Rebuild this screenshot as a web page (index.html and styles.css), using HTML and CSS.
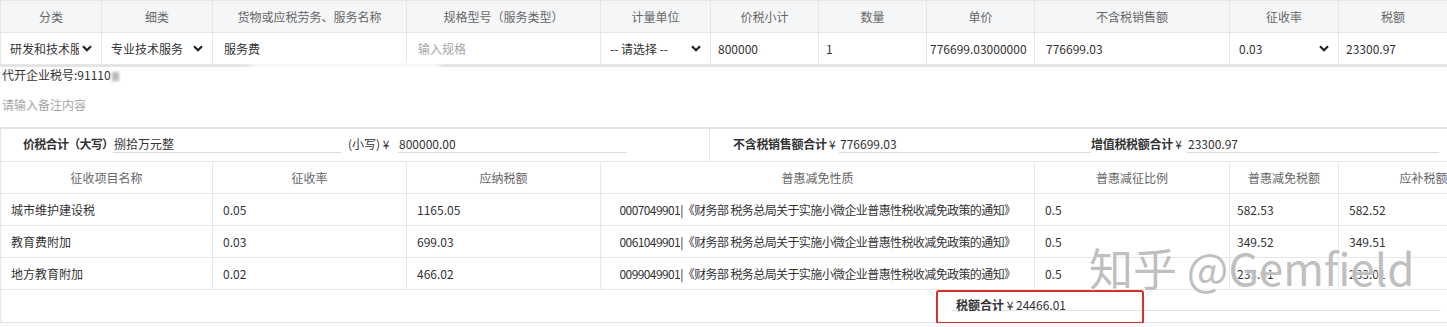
FILE: index.html
```html
<!DOCTYPE html>
<html lang="zh-CN">
<head>
  <meta charset="UTF-8">
  <title>代开发票 - 税额明细</title>
  <link rel="stylesheet" href="styles.css">
</head>
<body>
  <div class="invoice">
    <table class="goods">
      <colgroup>
        <col style="width:101px"><col style="width:111px"><col style="width:194px"><col style="width:194px">
        <col style="width:110px"><col style="width:108px"><col style="width:108px"><col style="width:108px">
        <col style="width:195px"><col style="width:109px"><col style="width:109px">
      </colgroup>
      <thead>
        <tr>
          <th>分类</th>
          <th>细类</th>
          <th>货物或应税劳务、服务名称</th>
          <th>规格型号（服务类型）</th>
          <th>计量单位</th>
          <th>价税小计</th>
          <th>数量</th>
          <th>单价</th>
          <th>不含税销售额</th>
          <th>征收率</th>
          <th>税额</th>
        </tr>
      </thead>
      <tbody>
        <tr>
          <td><div class="pick"><span>研发和技术服务</span><svg class="chev" viewBox="0 0 10 7"><path d="M1 1.2l4 4 4-4"/></svg></div></td>
          <td><div class="pick"><span>专业技术服务</span><svg class="chev" viewBox="0 0 10 7"><path d="M1 1.2l4 4 4-4"/></svg></div></td>
          <td class="wide">服务费</td>
          <td class="wide hint">输入规格</td>
          <td><div class="pick"><span>-- 请选择 --</span><svg class="chev" viewBox="0 0 10 7"><path d="M1 1.2l4 4 4-4"/></svg></div></td>
          <td class="snug">800000</td>
          <td class="snug">1</td>
          <td class="tight">776699.03000000</td>
          <td class="wide">776699.03</td>
          <td><div class="pick"><span>0.03</span><svg class="chev" viewBox="0 0 10 7"><path d="M1 1.2l4 4 4-4"/></svg></div></td>
          <td class="snug">23300.97</td>
        </tr>
      </tbody>
    </table>

    <div class="remarks">
      <div class="agent">代开企业税号:91110<span class="smudge"></span></div>
      <div class="hint note">请输入备注内容</div>
    </div>
    <div class="blur-band"></div>

    <div class="summary">
      <div class="sum-left">
        <b class="lbl-a">价税合计（大写）</b>
        <span class="field f-a">捌拾万元整</span>
        <span class="lbl-b">(小写) ¥</span>
        <span class="field f-b">800000.00</span>
      </div>
      <div class="sum-right">
        <span class="lbl-c"><b>不含税销售额合计</b> ¥</span>
        <span class="field f-c">776699.03</span>
        <span class="lbl-d"><b>增值税税额合计</b> ¥</span>
        <span class="field f-d">23300.97</span>
      </div>
    </div>

    <div class="levy-wrap">
      <table class="levy">
        <colgroup>
          <col style="width:212px"><col style="width:194px"><col style="width:194px"><col style="width:434px">
          <col style="width:195px"><col style="width:109px"><col style="width:170px">
        </colgroup>
        <thead>
          <tr>
            <th>征收项目名称</th>
            <th>征收率</th>
            <th>应纳税额</th>
            <th>普惠减免性质</th>
            <th>普惠减征比例</th>
            <th>普惠减免税额</th>
            <th>应补税额</th>
          </tr>
        </thead>
        <tbody>
          <tr>
            <td>城市维护建设税</td>
            <td>0.05</td>
            <td>1165.05</td>
            <td class="mid">0007049901|《财务部 税务总局关于实施小微企业普惠性税收减免政策的通知》</td>
            <td>0.5</td>
            <td class="snug">582.53</td>
            <td>582.52</td>
          </tr>
          <tr>
            <td>教育费附加</td>
            <td>0.03</td>
            <td>699.03</td>
            <td class="mid">0061049901|《财务部 税务总局关于实施小微企业普惠性税收减免政策的通知》</td>
            <td>0.5</td>
            <td class="snug">349.52</td>
            <td>349.51</td>
          </tr>
          <tr>
            <td>地方教育附加</td>
            <td>0.02</td>
            <td>466.02</td>
            <td class="mid">0099049901|《财务部 税务总局关于实施小微企业普惠性税收减免政策的通知》</td>
            <td>0.5</td>
            <td class="snug">233.01</td>
            <td>233.01</td>
          </tr>
        </tbody>
      </table>
      <div class="levy-foot">
        <div class="total"><b>税额合计</b> ¥ 24466.01</div>
        <div class="mark"></div>
      </div>
    </div>

    <div class="watermark">知乎 @Gemfield</div>
  </div>
</body>
</html>
```

FILE: styles.css
```css
* {
  box-sizing: border-box;
}

body {
  margin: 0;
  background: #fff;
  color: #333;
  font-family: "Noto Sans CJK SC", "Noto Sans", sans-serif;
  font-size: 12px;
}

.invoice {
  position: relative;
  width: 1447px;
  height: 327px;
  overflow: hidden;
  background: #fcfcfc;
}

table {
  border-collapse: collapse;
  table-layout: fixed;
  background: #fff;
}

th, td {
  height: 32px;
  border: 1px solid #e6e6e6;
  font-weight: normal;
  white-space: nowrap;
  overflow: hidden;
}

th {
  color: #666;
  text-align: center;
}

td {
  padding: 0 10px;
}

.goods {
  width: 1447px;
}

.goods th {
  background: #f5f6f8;
}

.goods td {
  padding: 0 9px;
}

.goods td.wide {
  padding-left: 11px;
}

.goods td.snug {
  padding-left: 7px;
}

.goods td.tight {
  padding: 0 3px;
}

.hint {
  color: #a6a6a6;
}

.pick {
  display: flex;
  align-items: center;
  justify-content: space-between;
  gap: 3px;
}

.pick span {
  overflow: hidden;
  white-space: nowrap;
}

.chev {
  flex: none;
  width: 10px;
  height: 7px;
}

.chev path {
  fill: none;
  stroke: #222;
  stroke-width: 2.2;
}

.remarks {
  height: 64px;
  padding: 0 2px;
  background: #fff;
  border-top: 2px solid #e3e3e3;
  border-bottom: 2px solid #e3e3e3;
}

.agent {
  line-height: 16px;
}

.smudge {
  display: inline-block;
  width: 7px;
  height: 9px;
  margin-left: 1px;
  vertical-align: -1px;
  background: #b8b8b8;
  filter: blur(1.4px);
}

.note {
  margin-top: 14px;
  line-height: 16px;
}

.blur-band {
  position: absolute;
  left: 250px;
  top: 61px;
  width: 190px;
  height: 12px;
  background: rgba(255, 255, 255, 0.85);
  filter: blur(3px);
}

.summary {
  display: flex;
  height: 32px;
  background: #fff;
  border-left: 1px solid #e6e6e6;
}

.sum-left,
.sum-right {
  display: flex;
  align-items: flex-start;
  padding-top: 7px;
  line-height: 16px;
  white-space: nowrap;
}

.sum-left {
  width: 709px;
  padding-left: 22px;
  border-right: 1px solid #e6e6e6;
}

.sum-right {
  flex: 1;
  padding-left: 23px;
}

.field {
  display: block;
  padding-left: 1px;
  border-bottom: 1px solid #dcdcdc;
}

.lbl-a { width: 90px; letter-spacing: -0.7px; }
.f-a { width: 228px; }
.lbl-b { width: 57px; padding-left: 7px; }
.f-b { width: 229px; }
.lbl-c { width: 106px; letter-spacing: -0.3px; }
.f-c { width: 252px; }
.lbl-d { width: 96px; letter-spacing: -0.3px; }
.f-d { width: 252px; }

.levy-wrap {
  position: relative;
  width: 1447px;
  overflow: hidden;
}

.levy {
  width: 1508px;
}

.levy td.mid {
  padding: 0;
  text-align: center;
  letter-spacing: -0.6px;
}

.levy td.snug {
  padding-left: 7px;
}

.levy-foot {
  position: relative;
  height: 33px;
  padding: 10px 0 0 950px;
  background: #fff;
  border-left: 1px solid #e6e6e6;
  border-bottom: 1px solid #e3e3e3;
}

.total {
  width: 490px;
  padding-left: 5px;
  line-height: 10px;
  height: 11px;
  border-bottom: 1px solid #e3e3e3;
}

.mark {
  position: absolute;
  left: 935px;
  top: 0;
  width: 208px;
  height: 34px;
  border: 2px solid #d8302b;
  border-radius: 3px;
}

.watermark {
  position: absolute;
  left: 1089px;
  top: 237px;
  font-size: 44px;
  line-height: 60px;
  white-space: nowrap;
  color: rgba(135, 135, 135, 0.55);
  text-shadow: 0 0 2px #fff, 0 0 2px #fff;
}
```
